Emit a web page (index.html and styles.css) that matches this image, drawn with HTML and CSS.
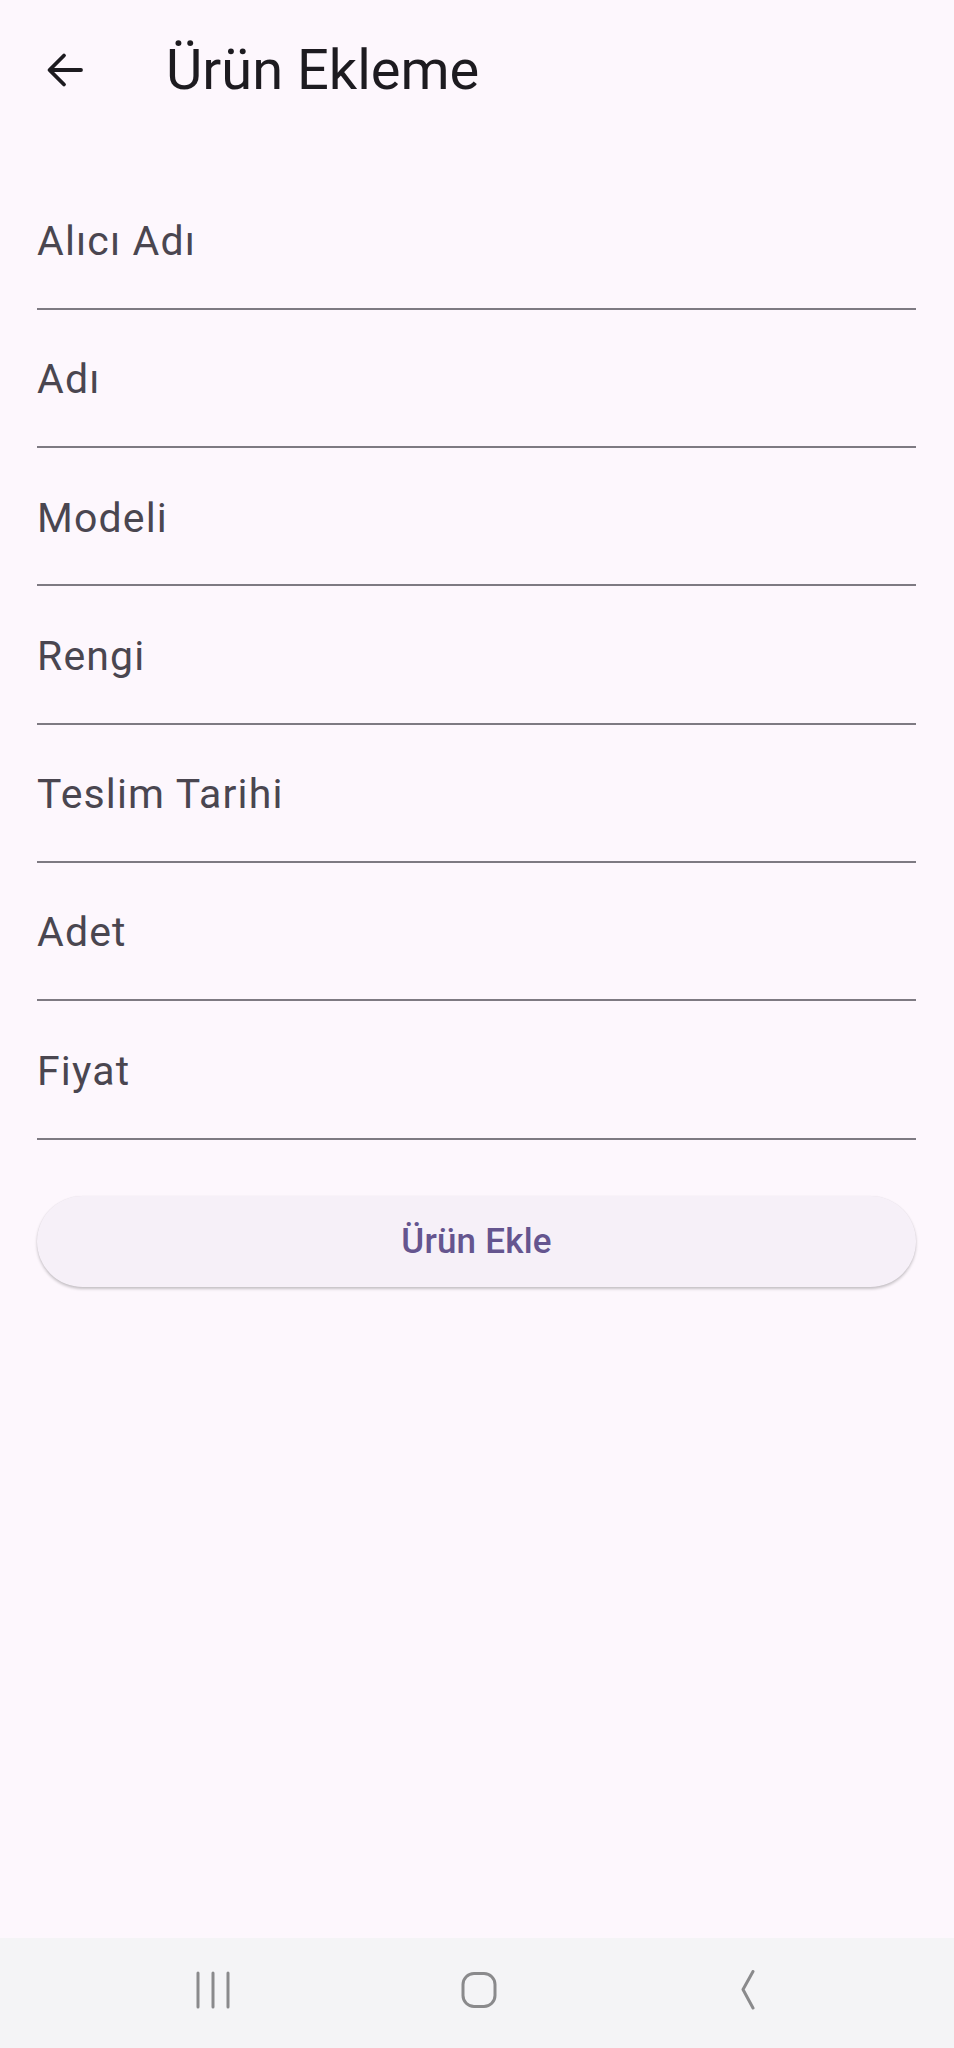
FILE: index.html
```html
<!DOCTYPE html>
<html lang="tr">
<head>
<meta charset="utf-8">
<title>Ürün Ekleme</title>
<link rel="stylesheet" href="styles.css">
</head>
<body>
<div class="screen">
  <header class="appbar">
    <button class="back" aria-label="Geri">
      <svg width="38" height="38" viewBox="0 0 38 38"><path d="M35 19H4M18 4.5L3.5 19L18 33.5" fill="none" stroke="#1D1B20" stroke-width="3.8" stroke-linecap="round" stroke-linejoin="round"/></svg>
    </button>
    <h1 class="title">Ürün Ekleme</h1>
  </header>
  <main class="form">
    <div class="field"><span class="label">Alıcı Adı</span></div>
    <div class="field"><span class="label">Adı</span></div>
    <div class="field"><span class="label">Modeli</span></div>
    <div class="field"><span class="label">Rengi</span></div>
    <div class="field"><span class="label">Teslim Tarihi</span></div>
    <div class="field"><span class="label">Adet</span></div>
    <div class="field"><span class="label">Fiyat</span></div>
    <button class="submit">Ürün Ekle</button>
  </main>
  <nav class="sysnav">
    <svg class="navicon" width="40" height="40" viewBox="0 0 40 40"><path d="M5 3v34M20 3v34M35 3v34" stroke="#8a8a8c" stroke-width="3" stroke-linecap="round"/></svg>
    <svg class="navicon" width="40" height="40" viewBox="0 0 40 40"><rect x="4" y="3.5" width="32" height="33" rx="11" fill="none" stroke="#8a8a8c" stroke-width="3"/></svg>
    <svg class="navicon" width="40" height="40" viewBox="0 0 40 40"><path d="M28 1.5L18 19.5L28 38" fill="none" stroke="#8a8a8c" stroke-width="3" stroke-linecap="round" stroke-linejoin="round"/></svg>
  </nav>
</div>
</body>
</html>
```
FILE: styles.css
```css
* { box-sizing: border-box; }
html, body {
  margin: 0;
  padding: 0;
  background: #FDF7FD;
}
body {
  font-family: Roboto, "Noto Sans", sans-serif;
  width: 954px;
  height: 2048px;
  overflow: hidden;
}
.screen {
  height: 2048px;
  display: flex;
  flex-direction: column;
}
.appbar {
  height: 140px;
  display: flex;
  align-items: center;
  padding-left: 45px;
  flex-shrink: 0;
}
.back {
  background: none;
  border: 0;
  padding: 0;
  width: 40px;
  height: 40px;
  display: flex;
  align-items: center;
  justify-content: center;
  margin-right: 81px;
}
.title {
  margin: 0;
  font-weight: 400;
  font-size: 56px;
  line-height: 1;
  color: #1D1B20;
}
.form {
  flex: 1;
  padding: 31.5px 38px 0 37px;
  display: flex;
  flex-direction: column;
}
.field {
  height: 138.3px;
  border-bottom: 2px solid #7E7A82;
  padding-top: 48.5px;
}
.label {
  display: block;
  font-size: 41px;
  line-height: 42px;
  letter-spacing: 1.15px;
  color: #4A4650;
}
.submit {
  margin-top: 56px;
  height: 91px;
  border: 0;
  border-radius: 46px;
  background: #F6F0F8;
  box-shadow: 0 2px 3px rgba(0,0,0,0.22), 0 0 1px rgba(0,0,0,0.08);
  font-family: Roboto, "Noto Sans", sans-serif;
  font-size: 35px;
  font-weight: 500;
  letter-spacing: 0.2px;
  color: #65558F;
  padding: 0;
}
.sysnav {
  height: 110px;
  flex-shrink: 0;
  background: #F4F4F6;
  display: flex;
  align-items: center;
  justify-content: flex-start;
  gap: 226px;
  padding-left: 193px;
  padding-bottom: 6px;
}
.navicon { display: block; flex-shrink: 0; }
```
